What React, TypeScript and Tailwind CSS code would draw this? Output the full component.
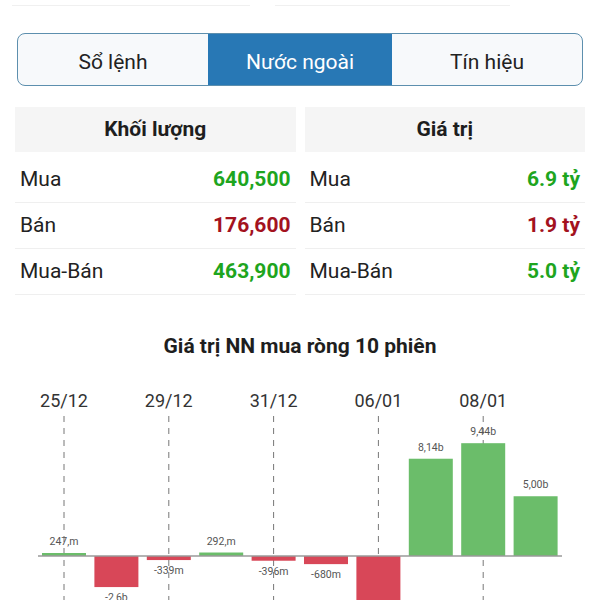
const volRows = [
  { label: 'Mua', value: '640,500', up: true },
  { label: 'Bán', value: '176,600', up: false },
  { label: 'Mua-Bán', value: '463,900', up: true },
];

const valRows = [
  { label: 'Mua', value: '6.9 tỷ', up: true },
  { label: 'Bán', value: '1.9 tỷ', up: false },
  { label: 'Mua-Bán', value: '5.0 tỷ', up: true },
];

// net foreign value per session (tỷ)
const bars = [
  { v: 0.247, label: '247,m' },
  { v: -2.6, label: '-2,6b' },
  { v: -0.339, label: '-339m' },
  { v: 0.292, label: '292,m' },
  { v: -0.396, label: '-396m' },
  { v: -0.68, label: '-680m' },
  { v: -4.2, label: '' },
  { v: 8.14, label: '8,14b' },
  { v: 9.44, label: '9,44b' },
  { v: 5.0, label: '5,00b' },
];

const dates = ['25/12', '29/12', '31/12', '06/01', '08/01'];

function StatTable({ title, rows }: { title: string; rows: typeof volRows }) {
  return (
    <div className="flex-1">
      <div className="h-[45px] mb-[5px] bg-[#f5f5f5] flex items-center justify-center text-[21px] font-bold text-[#1e1e1e]">
        {title}
      </div>
      {rows.map((r) => (
        <div
          key={r.label}
          className="h-[46px] flex items-center justify-between px-[5px] border-b border-[#efefef] text-[21px]"
        >
          <span className="text-[#222]">{r.label}</span>
          <span className={`font-bold ${r.up ? 'text-[#1ea51e]' : 'text-[#a3121e]'}`}>{r.value}</span>
        </div>
      ))}
    </div>
  );
}

function NetChart() {
  const base = 186; // y of zero line inside svg
  const scale = 11.95;
  const step = 52.4;
  const first = 64;
  const bw = 44;

  return (
    <svg width="600" height="230" viewBox="0 0 600 230" className="block">
      {dates.map((d, i) => {
        const x = first + i * 2 * step;
        return (
          <g key={d}>
            <text x={x} y={37} textAnchor="middle" fontSize="18" fill="#333" fontFamily="Roboto, sans-serif">
              {d}
            </text>
            <line x1={x} y1={46} x2={x} y2={230} stroke="#777" strokeWidth="1" strokeDasharray="6 6" />
          </g>
        );
      })}
      {bars.map((b, i) => {
        const cx = first + i * step;
        const h = Math.max(Math.abs(b.v) * scale, 3);
        const y = b.v >= 0 ? base - h : base;
        const labelY = b.v >= 0 ? y - 8 : y + h + 14;
        return (
          <g key={i}>
            <rect x={cx - bw / 2} y={y} width={bw} height={h} fill={b.v >= 0 ? '#6bbd6a' : '#d84758'} />
            {b.label && (
              <text
                x={cx}
                y={labelY}
                textAnchor="middle"
                fontSize="10.5"
                fill="#555"
                fontFamily="Roboto, sans-serif"
              >
                {b.label}
              </text>
            )}
          </g>
        );
      })}
      <line x1="38" y1={base} x2="562" y2={base} stroke="#9a9a9a" strokeWidth="1.5" />
    </svg>
  );
}

export default function App() {
  return (
    <div className="w-[600px] h-[600px] overflow-hidden bg-white font-['Roboto',sans-serif]">
      {/* faint cards above */}
      <div className="flex gap-[25px] px-[12px] h-[6px]">
        <div className="w-[238px] border-b border-[#f0f0f0]" />
        <div className="w-[235px] border-b border-[#f0f0f0]" />
      </div>

      {/* tabs */}
      <div className="mt-[27px] mx-[17px] h-[53px] flex rounded-[8px] border border-[#5d8fae] overflow-hidden bg-[#f7f9fb] text-[21px]">
        <div className="w-[190px] pt-[6px] flex items-center justify-center text-[#222]">Sổ lệnh</div>
        <div className="w-[184px] pt-[6px] flex items-center justify-center bg-[#2878b5] text-white">Nước ngoài</div>
        <div className="flex-1 pt-[6px] flex items-center justify-center text-[#222]">Tín hiệu</div>
      </div>

      {/* stats */}
      <div className="mt-[21px] mx-[15px] flex gap-[9px]">
        <StatTable title="Khối lượng" rows={volRows} />
        <StatTable title="Giá trị" rows={valRows} />
      </div>

      <div className="mt-[39px] text-center text-[21px] font-bold text-[#1e1e1e] leading-[24px]">
        Giá trị NN mua ròng 10 phiên
      </div>

      <div className="mt-[12px]">
        <NetChart />
      </div>
    </div>
  );
}
